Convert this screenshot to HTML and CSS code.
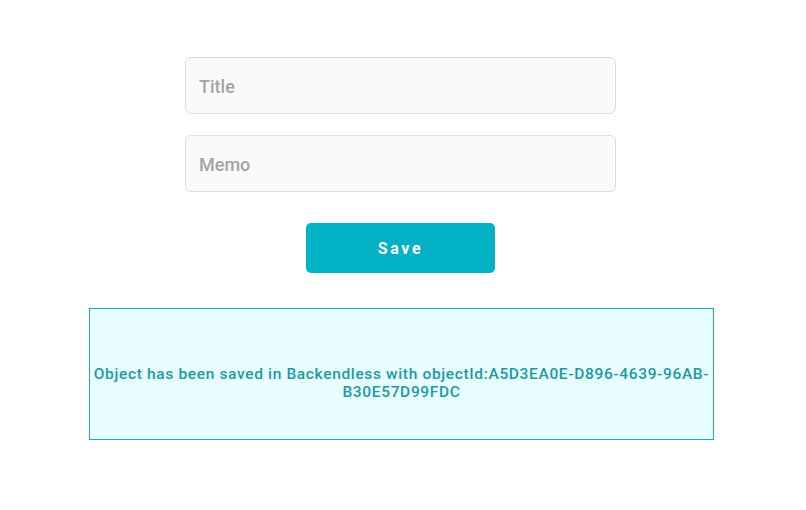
FILE: index.html
```html
<!DOCTYPE html>
<html>
<head>
<meta charset="utf-8">
<link rel="stylesheet" href="styles.css">
</head>
<body>
<div class="page">
  <div class="field">Title</div>
  <div class="field">Memo</div>
  <div class="btn">Save</div>
  <div class="result">Object has been saved in Backendless with objectId:A5D3EA0E-D896-4639-96AB-<br>B30E57D99FDC</div>
</div>
</body>
</html>
```
FILE: styles.css
```css
html, body { margin: 0; padding: 0; background: #fff; }
body { font-family: Roboto, "Liberation Sans", sans-serif; }
.page {
  width: 801px;
  display: flex;
  flex-direction: column;
  align-items: center;
  padding-top: 57px;
}
.field {
  box-sizing: border-box;
  width: 431px;
  height: 57px;
  border: 1px solid #dcdcdc;
  border-radius: 6px;
  background: #fafafa;
  color: #a3a3a3;
  font-size: 18px;
  font-weight: 500;
  padding-left: 13px;
  padding-top: 2px;
  display: flex;
  align-items: center;
  margin-bottom: 21px;
}
.field + .field { margin-bottom: 31px; }
.btn {
  box-sizing: border-box;
  width: 189px;
  height: 50px;
  border-radius: 5px;
  background: #02b2c4;
  color: #fff;
  font-size: 16px;
  font-weight: 700;
  letter-spacing: 2.6px;
  display: flex;
  align-items: center;
  justify-content: center;
  margin-bottom: 35px;
}
.result {
  box-sizing: border-box;
  width: 625px;
  height: 132px;
  margin-left: 2px;
  border: 1px solid #22a8b2;
  background: #e8fdfe;
  color: #1b9aa4;
  font-size: 15.5px;
  font-weight: 500;
  line-height: 18.5px;
  letter-spacing: 0.65px;
  text-align: center;
  padding-top: 18px;
  display: flex;
  align-items: center;
  justify-content: center;
  white-space: nowrap;
}
```
